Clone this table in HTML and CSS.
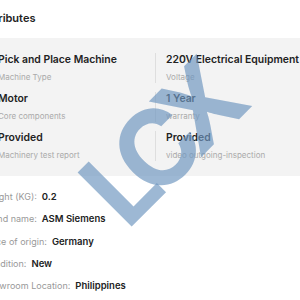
FILE: index.html
```html
<!DOCTYPE html>
<html>
<head>
<meta charset="utf-8">
<link rel="stylesheet" href="styles.css">
</head>
<body>
<div class="page">
  <h2 class="title">Attributes</h2>
  <div class="panel">
    <div class="col">
      <div class="item"><div class="val">Pick and Place Machine</div><div class="key">Machine Type</div></div>
      <div class="item"><div class="val">Motor</div><div class="key">Core components</div></div>
      <div class="item"><div class="val">Provided</div><div class="key">Machinery test report</div></div>
    </div>
    <div class="col right">
      <div class="item"><div class="val">220V Electrical Equipment</div><div class="key">Voltage</div></div>
      <div class="item"><div class="val">1 Year</div><div class="key">warranty</div></div>
      <div class="item"><div class="val">Provided</div><div class="key">video outgoing-inspection</div></div>
    </div>
  </div>
  <ul class="specs">
    <li><span class="lbl">Weight (KG):</span><span class="v">0.2</span></li>
    <li><span class="lbl">Brand name:</span><span class="v">ASM Siemens</span></li>
    <li><span class="lbl">Place of origin:</span><span class="v">Germany</span></li>
    <li><span class="lbl">Condition:</span><span class="v">New</span></li>
    <li><span class="lbl">Showroom Location:</span><span class="v">Philippines</span></li>
  </ul>
</div>
<div class="watermark">LCX</div>
</body>
</html>
```
FILE: styles.css
```css
html, body {
  margin: 0;
  padding: 0;
  background: #fff;
  overflow: hidden;
}
body {
  font-family: Inter, "Noto Sans", sans-serif;
  color: #222;
  width: 300px;
  height: 300px;
  position: relative;
}
.page {
  margin-left: -17px;
  width: 340px;
}
.title {
  margin: 0;
  padding-top: 10px;
  height: 28px;
  font-size: 11px;
  font-weight: 600;
  line-height: 16px;
  color: #222;
}
.panel {
  background: #f3f3f3;
  padding: 15px 0 15px 15px;
  display: grid;
  grid-template-columns: 157px 1fr;
}
.col {
  display: flex;
  flex-direction: column;
  gap: 9px;
}
.right .item {
  border-left: 1px solid #dedede;
  padding-left: 10px;
}
.item {
  display: flex;
  flex-direction: column;
  gap: 4px;
}
.val {
  font-size: 10.4px;
  font-weight: 600;
  line-height: 14px;
  white-space: nowrap;
  color: #222;
}
.key {
  font-size: 8px;
  line-height: 12px;
  color: #aaa;
  white-space: nowrap;
}
.specs {
  list-style: none;
  margin: 0;
  padding: 14px 0 0 0;
  display: flex;
  flex-direction: column;
  gap: 8.3px;
}
.specs li {
  display: flex;
  gap: 5px;
  line-height: 14px;
  white-space: nowrap;
}
.lbl {
  font-size: 9px;
  color: #999;
}
.v {
  font-size: 9.5px;
  color: #222;
  font-weight: 600;
}
.watermark {
  position: absolute;
  left: 158px;
  top: 146px;
  transform: translate(-50%, -50%) rotate(-45deg);
  font-family: Inter, sans-serif;
  font-weight: 700;
  font-size: 105px;
  letter-spacing: -15px;
  line-height: 1;
  color: rgba(110, 150, 192, 0.68);
  pointer-events: none;
}
```
